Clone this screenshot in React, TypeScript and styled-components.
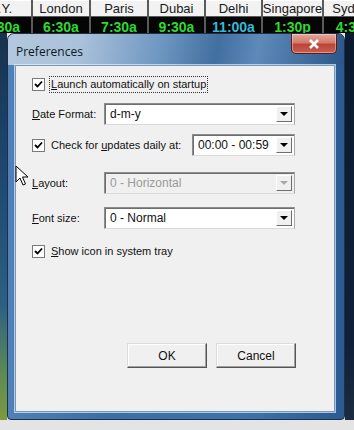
import React from "react";
import styled, { createGlobalStyle } from "styled-components";

const Global = createGlobalStyle`
  html, body { margin: 0; padding: 0; }
  body { background: #e6e6e6; }
`

const Page = styled.div`
  position: relative;
  width: 354px;
  height: 430px;
  overflow: hidden;
  display: flex;
  flex-direction: column;
  background: #e4e4e4;
`

const ClockBar = styled.div`
  display: flex;
  gap: 2px;
  height: 33px;
  background: #5a5a5a;
  overflow: hidden;
  flex-shrink: 0;
`

const ClockCol = styled.div<{ $w: number }>`
  width: ${({ $w }) => $w}px;
  flex-shrink: 0;
  display: flex;
  flex-direction: column;
  gap: 1px;
  overflow: hidden;
`

const CityCell = styled.div<{ $pad?: number }>`
  height: 17px;
  width: 100%;
  box-sizing: border-box;
  display: flex;
  align-items: center;
  justify-content: ${({ $pad }) => ($pad !== undefined ? "flex-end" : "center")};
  padding-right: ${({ $pad }) => $pad ?? 0}px;
  background: #f2f2f2;
  border-top: 1px solid #ffffff;
  font: 13px "Liberation Sans", Arial, sans-serif;
  color: #1a1a1a;
  white-space: nowrap;
`

const TimeCell = styled.div<{ $color: string; $pad?: number }>`
  height: 16px;
  width: 100%;
  box-sizing: border-box;
  display: flex;
  align-items: flex-start;
  justify-content: ${({ $pad }) => ($pad !== undefined ? "flex-end" : "center")};
  padding-right: ${({ $pad }) => $pad ?? 0}px;
  padding-top: 2px;
  background: #050505;
  color: ${({ $color }) => $color};
  font: bold 14px/16px "Liberation Sans", Arial, sans-serif;
  white-space: nowrap;
`

const Desk = styled.div`
  display: flex;
  height: 387px;
  flex-shrink: 0;
`

const LeftStrip = styled.div`
  width: 7px;
  flex-shrink: 0;
  background: linear-gradient(180deg, #16324f 0%, #1f4a74 40%, #2d5f83 70%, #5d8a56 88%, #7e9a3f 100%);
`

const RightStrip = styled.div`
  flex: 1;
  background: linear-gradient(180deg, #0b1a2e, #0f2038 80%, #1c2c40 100%);
`

const Window = styled.div`
  width: 338px;
  flex-shrink: 0;
  box-sizing: border-box;
  display: flex;
  flex-direction: column;
  border: 1px solid #1d3047;
  border-radius: 7px 7px 4px 4px;
  background: linear-gradient(90deg, #4f81b8 0%, #3a6ea6 30%, #3d73ad 70%, #2a5a92 100%);
  overflow: hidden;
`

const TitleBar = styled.div`
  height: 31px;
  flex-shrink: 0;
  display: flex;
  justify-content: space-between;
  align-items: flex-start;
  background: linear-gradient(100deg, #b3c8de 0%, #a9c1da 22%, #6f97c2 45%, #416f9f 62%, #5e8aba 74%, #2b5788 100%);
`

const Title = styled.div`
  margin: 9px 0 0 8px;
  font: 12px "Open Sans", "Noto Sans", sans-serif;
  color: #101820;
`

const CloseButton = styled.div`
  margin-right: 7px;
  width: 46px;
  height: 20px;
  box-sizing: border-box;
  border: 1px solid #5a1c1c;
  border-top: none;
  border-radius: 0 0 5px 5px;
  background: linear-gradient(180deg, #e6a89c 0%, #d47a6b 45%, #bb4536 55%, #c95f50 100%);
  display: flex;
  align-items: center;
  justify-content: center;
  box-shadow: inset 0 0 0 1px rgba(255, 255, 255, 0.35);
`

const Client = styled.div`
  flex: 1;
  margin: 0 9px 7px 7px;
  background: #f0f0f0;
  border: 1px solid #7b97b6;
  box-shadow: 0 0 0 1px rgba(230, 240, 250, 0.7);
  display: flex;
  flex-direction: column;
  padding-left: 16px;
  font: 11px "Liberation Sans", Arial, sans-serif;
  color: #111;
`

const Row = styled.div<{ $top: number }>`
  display: flex;
  align-items: center;
  width: 263px;
  height: 22px;
  margin-top: ${({ $top }) => $top}px;
`

const CheckRow = styled.div<{ $top?: number }>`
  display: flex;
  align-items: center;
  height: 18px;
  gap: 4px;
  margin-top: ${({ $top }) => $top ?? 0}px;
`

const Label = styled.div`
  width: 72px;
  flex-shrink: 0;
  white-space: nowrap;
`

const CheckLabel = styled.div<{ $focus?: boolean }>`
  padding: 1px 1px 2px 1px;
  border: 1px dotted ${({ $focus }) => ($focus ? "#333" : "transparent")};
  white-space: nowrap;
`

const Box = styled.div`
  width: 11px;
  height: 11px;
  border: 1px solid #7a7a7a;
  background: #ffffff;
  display: flex;
  align-items: center;
  justify-content: center;
  flex-shrink: 0;
`

const Combo = styled.div<{ $w: number; $disabled?: boolean }>`
  width: ${({ $w }) => $w}px;
  height: 22px;
  margin-left: auto;
  box-sizing: border-box;
  display: flex;
  align-items: center;
  border: 1px solid #8c8c8c;
  border-right-color: #a9a9a9;
  border-bottom-color: #dadada;
  box-shadow: inset 1px 1px 0 #6e6e6e;
  background: ${({ $disabled }) => ($disabled ? "#f0f0f0" : "#ffffff")};
  color: ${({ $disabled }) => ($disabled ? "#9a9a9a" : "#111")};
  font-size: 12px;
  padding: 0 2px 0 5px;
`

const ComboText = styled.div`
  flex: 1;
  white-space: nowrap;
`

const ArrowButton = styled.div`
  width: 16px;
  height: 16px;
  box-sizing: border-box;
  background: #f0f0f0;
  border: 1px solid #ffffff;
  border-right-color: #6e6e6e;
  border-bottom-color: #6e6e6e;
  display: flex;
  align-items: center;
  justify-content: center;
`

const Arrow = styled.div<{ $disabled?: boolean }>`
  width: 0;
  height: 0;
  border-left: 4px solid transparent;
  border-right: 4px solid transparent;
  border-top: 4px solid ${({ $disabled }) => ($disabled ? "#a8a8a8" : "#000")};
`

const Buttons = styled.div`
  margin-top: auto;
  margin-bottom: 43px;
  display: flex;
  justify-content: flex-end;
  gap: 9px;
  padding-right: 38px;
`

const Button = styled.div`
  width: 80px;
  height: 25px;
  box-sizing: border-box;
  display: flex;
  align-items: center;
  justify-content: center;
  background: #f0f0f0;
  border: 1px solid #dcdcdc;
  border-right-color: #555;
  border-bottom-color: #555;
  box-shadow: inset -1px -1px 0 #a0a0a0, inset 1px 1px 0 #ffffff;
  font-size: 12px;
`

const Cursor = styled.svg`
  position: absolute;
  left: 15px;
  top: 165px;
`

const U = styled.span`
  text-decoration: underline;
`

const Check = () => (
  <Box>
    <svg width="9" height="9" viewBox="0 0 9 9">
      <path d="M1 4 L3.5 6.5 L8 1.5" stroke="#000" strokeWidth="1.8" fill="none" />
    </svg>
  </Box>
)

const Select = ({ w, value, disabled }: { w: number; value: string; disabled?: boolean }) => (
  <Combo $w={w} $disabled={disabled}>
    <ComboText>{value}</ComboText>
    <ArrowButton>
      <Arrow $disabled={disabled} />
    </ArrowButton>
  </Combo>
)

const GREEN = "#2fd92f"

const cities = [
  { name: "London", time: "6:30a", w: 56, color: GREEN },
  { name: "Paris", time: "7:30a", w: 56, color: GREEN },
  { name: "Dubai", time: "9:30a", w: 55, color: GREEN },
  { name: "Delhi", time: "11:00a", w: 55, color: "#35b9d8" },
  { name: "Singapore", time: "1:30p", w: 59, color: GREEN },
  { name: "Sydney", time: "4:30p", w: 60, color: GREEN },
]

const App = () => (
  <Page>
    <Global />
    <ClockBar>
      <ClockCol $w={31}>
        <CityCell $pad={19}>N.Y.</CityCell>
        <TimeCell $color={GREEN} $pad={11}>4:30a</TimeCell>
      </ClockCol>
      {cities.map((c) => (
        <ClockCol key={c.name} $w={c.w}>
          <CityCell>{c.name}</CityCell>
          <TimeCell $color={c.color}>{c.time}</TimeCell>
        </ClockCol>
      ))}
    </ClockBar>
    <Desk>
      <LeftStrip />
      <Window>
        <TitleBar>
          <Title>Preferences</Title>
          <CloseButton>
            <svg width="12" height="10" viewBox="0 0 12 10">
              <path d="M2 1 L10 9 M10 1 L2 9" stroke="#fff" strokeWidth="2.6" />
            </svg>
          </CloseButton>
        </TitleBar>
        <Client>
          <CheckRow $top={9}>
            <Check />
            <CheckLabel $focus>
              <U>L</U>aunch automatically on startup
            </CheckLabel>
          </CheckRow>
          <Row $top={10}>
            <Label>
              <U>D</U>ate Format:
            </Label>
            <Select w={191} value="d-m-y" />
          </Row>
          <Row $top={9}>
            <CheckRow>
              <Check />
              <CheckLabel>
                Check for <U>u</U>pdates daily at:
              </CheckLabel>
            </CheckRow>
            <Select w={103} value="00:00 - 00:59" />
          </Row>
          <Row $top={16}>
            <Label>
              <U>L</U>ayout:
            </Label>
            <Select w={191} value="0 - Horizontal" disabled />
          </Row>
          <Row $top={13}>
            <Label>
              <U>F</U>ont size:
            </Label>
            <Select w={191} value="0 - Normal" />
          </Row>
          <CheckRow $top={13}>
            <Check />
            <CheckLabel>
              <U>S</U>how icon in system tray
            </CheckLabel>
          </CheckRow>
          <Buttons>
            <Button>OK</Button>
            <Button>Cancel</Button>
          </Buttons>
        </Client>
      </Window>
      <RightStrip />
    </Desk>
    <Cursor width="14" height="22" viewBox="0 0 14 22">
      <path d="M1 1 L1 17 L5 13 L8 20 L10.5 19 L7.5 12 L13 12 Z" fill="#fff" stroke="#000" strokeWidth="1" strokeLinejoin="round" />
    </Cursor>
  </Page>
)

export default App
